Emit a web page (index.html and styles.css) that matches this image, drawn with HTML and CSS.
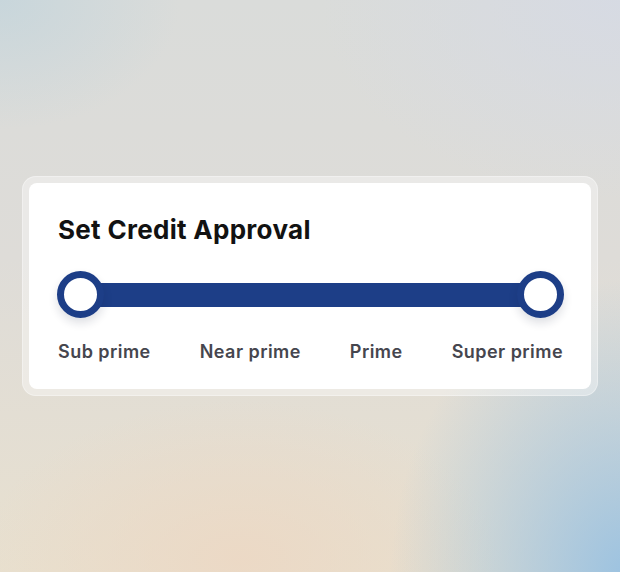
FILE: index.html
```html
<!DOCTYPE html>
<html>
<head>
<meta charset="utf-8">
<link rel="stylesheet" href="styles.css">
</head>
<body>
<div class="page">
  <div class="frame">
    <div class="card">
      <h1 class="title">Set Credit Approval</h1>
      <div class="slider">
        <div class="track"></div>
        <span class="thumb thumb-left"></span>
        <span class="thumb thumb-right"></span>
      </div>
      <div class="labels">
        <span>Sub prime</span>
        <span>Near prime</span>
        <span>Prime</span>
        <span>Super prime</span>
      </div>
    </div>
  </div>
</div>
</body>
</html>
```
FILE: styles.css
```css
html, body {
  margin: 0;
  padding: 0;
}
body {
  font-family: Inter, "Noto Sans", sans-serif;
}
.page {
  width: 620px;
  height: 572px;
  box-sizing: border-box;
  padding-top: 176px;
  padding-left: 22px;
  background:
    radial-gradient(ellipse 240px 300px at 630px 580px, rgba(150,192,226,0.95), rgba(160,196,224,0) 100%),
    radial-gradient(ellipse 180px 130px at 0px 0px, rgba(194,212,220,0.75), rgba(194,212,220,0) 100%),
    radial-gradient(ellipse 260px 160px at 240px 560px, rgba(236,216,196,0.9), rgba(236,216,196,0) 100%),
    radial-gradient(ellipse 300px 200px at 620px 0px, rgba(214,218,228,0.9), rgba(214,218,228,0) 100%),
    linear-gradient(180deg, #dadcda 0%, #dedcd8 45%, #e8e0cf 100%);
}
.frame {
  width: 576px;
  box-sizing: border-box;
  padding: 7px;
  border-radius: 14px;
  background: rgba(255,255,255,0.38);
  box-shadow: inset 0 0 0 1px rgba(255,255,255,0.35);
}
.card {
  background: #fff;
  border-radius: 8px;
  padding: 31px 28px 27px 29px;
  height: 206px;
  box-sizing: border-box;
}
.title {
  margin: 0;
  font-size: 26px;
  line-height: 32px;
  font-weight: 700;
  color: #121212;
  letter-spacing: 0.3px;
}
.slider {
  position: relative;
  height: 48px;
  margin-top: 25px;
  margin-left: -1px;
  display: flex;
  align-items: center;
}
.track {
  flex: 1;
  height: 24px;
  margin: 0 20px;
  background: #1d3e87;
}
.thumb {
  position: absolute;
  top: 0;
  width: 47px;
  height: 47px;
  box-sizing: border-box;
  border-radius: 50%;
  border: 7px solid #1d3e87;
  background: #fff;
  box-shadow: 0 5px 10px rgba(20,30,60,0.14);
}
.thumb-left { left: 0; }
.thumb-right { right: -1px; }
.labels {
  margin-top: 22px;
  display: flex;
  justify-content: space-between;
  font-size: 18px;
  line-height: 22px;
  font-weight: 600;
  color: #46464e;
  letter-spacing: 0.45px;
}
```
